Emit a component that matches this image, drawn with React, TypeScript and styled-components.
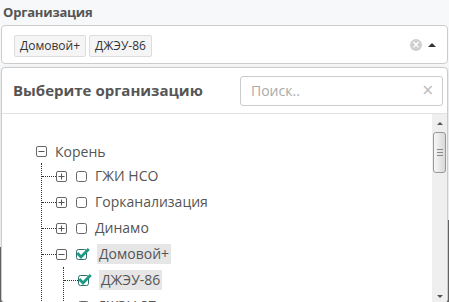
import React from "react";
import styled, { createGlobalStyle } from "styled-components";

const GlobalStyle = createGlobalStyle`
  html, body { margin: 0; padding: 0; background: #f7f8fa; }
  body {
    font-family: "Open Sans", "Noto Sans", sans-serif;
    width: 449px;
    height: 302px;
    overflow: hidden;
  }
  * { box-sizing: border-box; }
`;

const Page = styled.div`
  display: flex;
  flex-direction: column;
  height: 302px;
  overflow: hidden;
`;

const FieldLabel = styled.div`
  font-weight: 700;
  font-size: 13px;
  line-height: 18px;
  color: #555;
  padding: 3px 0 0 3px;
  margin-bottom: 4px;
  letter-spacing: -0.2px;
`;

const SelectBox = styled.div`
  margin-left: 1px;
  width: 447px;
  height: 39px;
  flex: none;
  border: 1px solid #ccc;
  border-radius: 4px;
  background: #fff;
  display: flex;
  align-items: center;
  padding: 2px 0 0 12px;
  gap: 3px;
`;

const Tag = styled.span`
  height: 22px;
  display: inline-flex;
  align-items: center;
  padding: 0 5px;
  font-size: 12px;
  color: #333;
  background: #f5f5f5;
  border: 1px solid #ddd;
  border-radius: 2px;
`;

const Controls = styled.div`
  margin-left: auto;
  margin-top: -2px;
  display: flex;
  align-items: center;
  gap: 6px;
  padding-right: 11px;
`;

const ClearIcon = styled.span`
  width: 12px;
  height: 12px;
  border-radius: 50%;
  background: #d0d0d0;
  color: #fff;
  font-size: 10px;
  font-weight: 700;
  line-height: 12px;
  text-align: center;
  font-family: "DejaVu Sans", sans-serif;
`;

const ArrowUp = styled.span`
  width: 0;
  height: 0;
  border-left: 4px solid transparent;
  border-right: 4px solid transparent;
  border-bottom: 4px solid #333;
`;

const Stage = styled.div`
  position: relative;
  flex: 1;
`;

const Backdrop = styled.div`
  display: grid;
  grid-template-columns: 3px 1fr 2px;
  height: 100%;
`;

const DarkStrip = styled.div<{ $top: number }>`
  margin-top: ${(p) => p.$top}px;
  background: #686868;
`;

const Panel = styled.div`
  position: absolute;
  top: 3px;
  left: 1px;
  width: 447px;
  bottom: -1px;
  border: 1px solid #ccc;
  border-radius: 4px;
  background: #fff;
  display: flex;
  flex-direction: column;
  box-shadow: 0 2px 6px rgba(0, 0, 0, 0.12);
  overflow: hidden;
`;

const PanelHeader = styled.div`
  height: 46px;
  flex: none;
  border-bottom: 1px solid #e2e2e2;
  display: flex;
  align-items: center;
  justify-content: space-between;
  padding: 0 4px 0 11px;
`;

const PanelTitle = styled.div`
  font-weight: 700;
  font-size: 15px;
  color: #555;
  margin-top: -2px;
`;

const SearchBox = styled.div`
  width: 203px;
  height: 30px;
  border: 1px solid #ccc;
  border-radius: 3px;
  display: flex;
  align-items: center;
  padding: 0 8px 0 10px;
`;

const SearchInput = styled.input`
  flex: 1;
  min-width: 0;
  border: none;
  outline: none;
  padding: 0;
  font-family: "Open Sans", sans-serif;
  font-size: 14px;
  color: #555;
  background: transparent;
  &::placeholder { color: #aaa; }
`;

const SearchClear = styled.span`
  color: #bbb;
  font-size: 15px;
  font-family: "DejaVu Sans", sans-serif;
  line-height: 1;
`;

const PanelBody = styled.div`
  flex: 1;
  display: flex;
  min-height: 0;
`;

const TreeArea = styled.div`
  flex: 1;
  padding-top: 26px;
  overflow: hidden;
  font-size: 14px;
  color: #555;
`;

const RootRow = styled.div`
  height: 23px;
  display: flex;
  align-items: center;
  padding-left: 34px;
`;

const Branch = styled.ul<{ $indent: number }>`
  list-style: none;
  margin: 0 0 0 ${(p) => p.$indent}px;
  padding: 0;
  border-left: 1px dotted #333;
`;

const Row = styled.div`
  height: 26px;
  display: flex;
  align-items: center;
`;

const Connector = styled.span`
  width: 14px;
  height: 0;
  border-top: 1px dotted #333;
  flex: none;
`;

const NodeLabel = styled.span<{ $selected?: boolean; $gap: number }>`
  margin-left: ${(p) => p.$gap}px;
  padding: 0 ${(p) => (p.$selected ? 2 : 0)}px;
  line-height: 20px;
  white-space: nowrap;
  background: ${(p) => (p.$selected ? "#e6e6e6" : "transparent")};
`;

const CheckWrap = styled.span<{ $gap: number }>`
  margin-left: ${(p) => p.$gap}px;
  display: inline-flex;
  flex: none;
`;

const Scrollbar = styled.div`
  width: 15px;
  flex: none;
  background: #efefef;
  display: flex;
  flex-direction: column;
  align-items: center;
  padding: 8px 0 4px;
`;

const ScrollArrow = styled.span<{ $down?: boolean }>`
  width: 0;
  height: 0;
  border-left: 3px solid transparent;
  border-right: 3px solid transparent;
  ${(p) => (p.$down ? "border-top: 3px solid #555;" : "border-bottom: 3px solid #555;")}
  ${(p) => (p.$down ? "margin-top: auto;" : "")}
`;

const Thumb = styled.div`
  margin-top: 7px;
  width: 13px;
  height: 41px;
  border: 1px solid #999;
  border-radius: 3px;
  background: linear-gradient(to right, #f6f6f6, #d9d9d9);
  display: flex;
  flex-direction: column;
  align-items: center;
  justify-content: center;
  gap: 2px;
`;

const Grip = styled.span`
  width: 6px;
  height: 1px;
  background: #888;
`;

function Expander({ open }: { open: boolean }) {
  return (
    <svg width="11" height="11" viewBox="0 0 11 11" style={{ flex: "none" }}>
      <rect x="0.5" y="0.5" width="10" height="10" rx="1.5" fill="#fff" stroke="#666" />
      <line x1="2.5" y1="5.5" x2="8.5" y2="5.5" stroke="#555" />
      {!open && <line x1="5.5" y1="2.5" x2="5.5" y2="8.5" stroke="#555" />}
    </svg>
  );
}

function Check({ checked }: { checked: boolean }) {
  return (
    <svg width="11" height="11" viewBox="0 0 11 11" overflow="visible">
      <rect x="0.5" y="0.5" width="10" height="10" rx="2" fill="#fff" stroke={checked ? "#2b6f68" : "#666"} />
      {checked && (
        <path d="M2.2 5 L5 7.9 L11.8 1" fill="none" stroke="#1d9a86" strokeWidth="2.8" strokeLinecap="square" />
      )}
    </svg>
  );
}

type Node = {
  name: string;
  checked?: boolean;
  selected?: boolean;
  open?: boolean;
  children?: Node[];
};

const orgs: Node[] = [
  { name: "ГЖИ НСО", children: [] },
  { name: "Горканализация", children: [] },
  { name: "Динамо", children: [] },
  {
    name: "Домовой+",
    checked: true,
    selected: true,
    open: true,
    children: [
      { name: "ДЖЭУ-86", checked: true, selected: true },
      { name: "ДЖЭУ-87" },
      { name: "ДЖЭУ-88" },
    ],
  },
];

function TreeNode({ node }: { node: Node }) {
  const hasKids = !!node.children;
  return (
    <li>
      <Row>
        <Connector />
        {hasKids && <Expander open={!!node.open} />}
        <CheckWrap $gap={hasKids ? 9 : 0}>
          <Check checked={!!node.checked} />
        </CheckWrap>
        <NodeLabel $selected={node.selected} $gap={node.selected ? 10 : 8}>
          {node.name}
        </NodeLabel>
      </Row>
      {node.open && node.children && node.children.length > 0 && (
        <Branch $indent={21}>
          {node.children.map((c) => (
            <TreeNode key={c.name} node={c} />
          ))}
        </Branch>
      )}
    </li>
  );
}

export default function App() {
  return (
    <>
      <GlobalStyle />
      <Page>
        <FieldLabel>Организация</FieldLabel>
        <SelectBox>
          <Tag>Домовой+</Tag>
          <Tag>ДЖЭУ-86</Tag>
          <Controls>
            <ClearIcon>×</ClearIcon>
            <ArrowUp />
          </Controls>
        </SelectBox>
        <Stage>
          <Backdrop>
            <DarkStrip $top={183} />
            <div />
            <DarkStrip $top={156} />
          </Backdrop>
          <Panel>
            <PanelHeader>
              <PanelTitle>Выберите организацию</PanelTitle>
              <SearchBox>
                <SearchInput placeholder="Поиск.." />
                <SearchClear>×</SearchClear>
              </SearchBox>
            </PanelHeader>
            <PanelBody>
              <TreeArea>
                <RootRow>
                  <Expander open />
                  <NodeLabel $gap={8}>Корень</NodeLabel>
                </RootRow>
                <Branch $indent={39}>
                  {orgs.map((n) => (
                    <TreeNode key={n.name} node={n} />
                  ))}
                </Branch>
              </TreeArea>
              <Scrollbar>
                <ScrollArrow />
                <Thumb>
                  <Grip />
                  <Grip />
                  <Grip />
                </Thumb>
                <ScrollArrow $down />
              </Scrollbar>
            </PanelBody>
          </Panel>
        </Stage>
      </Page>
    </>
  );
}
